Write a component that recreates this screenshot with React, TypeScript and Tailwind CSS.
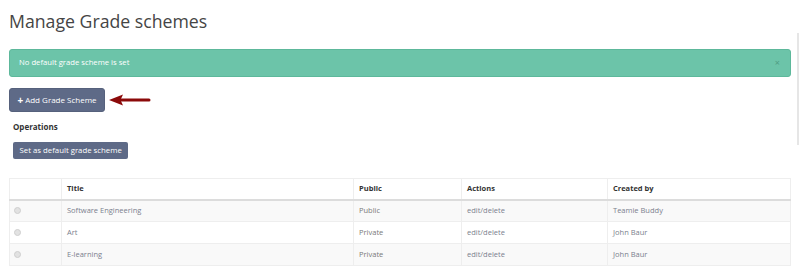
import React from 'react'

const rows = [
    { title: 'Software Engineering', access: 'Public', creator: 'Teamie Buddy' },
    { title: 'Art', access: 'Private', creator: 'John Baur' },
    { title: 'E-learning', access: 'Private', creator: 'John Baur' },
]

const App = () => {
    return (
        <div className="relative w-[799px] h-[267px] overflow-hidden bg-white font-['Open_Sans',sans-serif]">
            {/* partial scrollbar edge */}
            <div className="absolute right-0 top-[33px] h-[112px] w-[2px] bg-[#e6e6e6]" />

            <div className="w-[782px] ml-[9px]">
                <h1 className="pt-[8px] text-[17.7px] leading-[26px] text-[#454545]">
                    Manage Grade schemes
                </h1>

                <div className="mt-[15px] h-[28px] flex items-center justify-between px-[9px] rounded-[3px] border border-[#5db89b] bg-[#6cc4a9] text-[7.7px] text-white">
                    <span>No default grade scheme is set</span>
                    <span className="text-[9px] text-[#4f9c84] mr-[1px]">×</span>
                </div>

                <div className="mt-[11px] flex items-center gap-[4px]">
                    <button className="h-[24px] w-[96px] rounded-[3px] bg-[#5e6a87] border border-[#56617c] text-white text-[8px] flex items-center justify-center gap-[2px]">
                        <span className="font-bold text-[10px] leading-none">+</span>
                        <span>Add Grade Scheme</span>
                    </button>
                    <svg width="42" height="12" viewBox="0 0 42 12">
                        <path d="M40 6 L12 6" stroke="#8b0a0a" strokeWidth="3" strokeLinecap="round" />
                        <path d="M0 6 L14 0.5 L11.5 6 L14 11.5 Z" fill="#8b0a0a" />
                    </svg>
                </div>

                <div className="ml-[4px] mt-[9px] text-[8px] font-bold text-[#333]">Operations</div>
                <button className="ml-[4px] mt-[9px] h-[17px] px-[6.5px] rounded-[2px] bg-[#5e6a87] text-white text-[7.8px]">
                    Set as default grade scheme
                </button>

                <table className="mt-[19px] w-full border-collapse text-[7.5px] text-[#7a7a7a]">
                    <thead>
                        <tr className="h-[21px] text-left text-[#333] font-bold">
                            <th className="w-[52px] border border-[#eee] border-b-2 border-b-[#dcdcdc]" />
                            <th className="w-[292px] pl-[5px] border border-[#eee] border-b-2 border-b-[#dcdcdc]">Title</th>
                            <th className="w-[108px] pl-[5px] border border-[#eee] border-b-2 border-b-[#dcdcdc]">Public</th>
                            <th className="w-[146px] pl-[5px] border border-[#eee] border-b-2 border-b-[#dcdcdc]">Actions</th>
                            <th className="pl-[5px] border border-[#eee] border-b-2 border-b-[#dcdcdc]">Created by</th>
                        </tr>
                    </thead>
                    <tbody>
                        {rows.map((row, index) => (
                            <tr key={index} className={index % 2 === 0 ? 'h-[22px] bg-[#f9f9f9]' : 'h-[22px] bg-white'}>
                                <td className="border border-[#eee] pl-[4px]">
                                    <div className="w-[7px] h-[7px] rounded-full bg-[#e2e2e2] border border-[#cfcfcf]" />
                                </td>
                                <td className="border border-[#eee] pl-[5px] text-[#7b7f8e]">{row.title}</td>
                                <td className="border border-[#eee] pl-[5px] font-normal">{row.access}</td>
                                <td className="border border-[#eee] pl-[5px] text-[#7b7f8e]">edit/delete</td>
                                <td className="border border-[#eee] pl-[5px] text-[#7b7f8e]">{row.creator}</td>
                            </tr>
                        ))}
                    </tbody>
                </table>
            </div>
        </div>
    )
}

export default App
